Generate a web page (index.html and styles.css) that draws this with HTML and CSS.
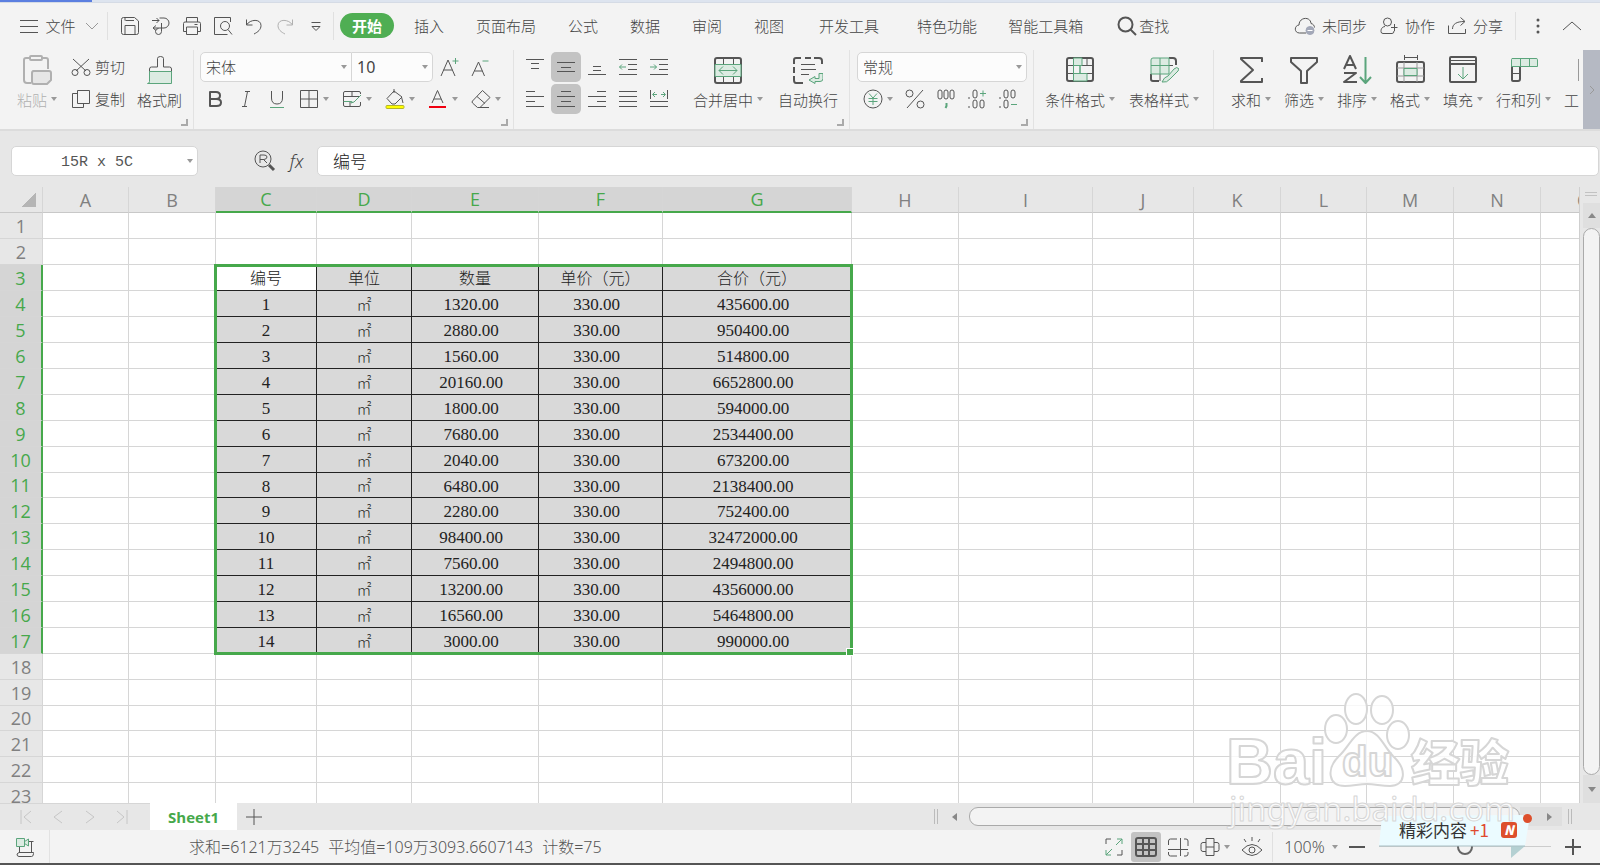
FILE: index.html
```
<!DOCTYPE html>
<html lang="zh-CN">
<head>
    <meta charset="UTF-8">
    <meta name="viewport" content="width=device-width, initial-scale=1.0">
    <title>Sheet1</title>
    <link rel="stylesheet" href="styles.css">
</head>
<body>
    <!-- Document tabs edge -->
    <div class="doc-strip"><span class="doc-active"></span><span class="doc-rest"></span></div>

    <!-- Menu bar -->
    <nav class="menu-bar">
        <button class="file-btn">
            <svg width="20" height="20" viewBox="0 0 20 20"><path d="M1 4.500h18M1 10.500h18M1 16.500h18"/></svg>
            文件
            <svg class="light" width="14" height="20" viewBox="0 0 14 20"><path d="M1 7l6 6 6-6"/></svg>
        </button>
        <span class="sep"></span>
        <div class="quick">
            <button aria-label="保存"><svg width="20" height="20" viewBox="0 0 20 20"><path d="M1.500 3.500q0-2 2-2h11l4 3.500v11.500q0 2-2 2h-13q-2 0-2-2zM5 18v-8.500h10V18M5.500 4.500h8.500M5 1.500v3"/></svg></button>
            <button aria-label="输出"><svg width="20" height="20" viewBox="0 0 20 20"><path d="M1 4.500h7M5.500 2l2.500 2.500L5.500 7M8.500 2H13a5 5 0 0 1 0 10H2M5 9.500L2 12l3 2.500M10.500 7v8.500a3 3 0 1 1-3-3"/></svg></button>
            <button aria-label="打印"><svg width="20" height="20" viewBox="0 0 20 20"><path d="M4.500 6V1.500h11V6M4.500 15.500h-3v-8q0-1.500 1.500-1.500h14q1.500 0 1.500 1.500v8h-3M4.500 11h11v7.500h-11zM12.500 8.500h3"/></svg></button>
            <button aria-label="打印预览"><svg width="20" height="20" viewBox="0 0 20 20"><path d="M17.500 6V1.500h-16v17h13"/><circle cx="12" cy="10" r="4.500"/><path d="M15 13.500l4 5"/></svg></button>
            <button aria-label="撤销"><svg width="20" height="20" viewBox="0 0 20 20"><path d="M2.500 3.500v5.500h6M2.500 9C6 3 17 2.500 17 9.500c0 4-3 6.500-7 8.500"/></svg></button>
            <button aria-label="恢复" class="off"><svg width="20" height="20" viewBox="0 0 20 20"><path d="M17.500 3.500v5.500h-6M17.500 9C14 3 3 2.500 3 9.500c0 4 3 6.500 7 8.500"/></svg></button>
            <button aria-label="更多"><svg width="20" height="20" viewBox="0 0 20 20"><path d="M5.500 6.500h9M6 10.500l4 4 4-4z"/></svg></button>
        </div>
        <span class="sep"></span>
        <button class="tab active">开始</button>
        <button class="tab">插入</button>
        <button class="tab">页面布局</button>
        <button class="tab">公式</button>
        <button class="tab">数据</button>
        <button class="tab">审阅</button>
        <button class="tab">视图</button>
        <button class="tab wide">开发工具</button>
        <button class="tab wide">特色功能</button>
        <button class="tab tight">智能工具箱</button>
        <button class="find">
            <svg width="20" height="20" viewBox="0 0 20 20" stroke-width="2"><circle cx="8.500" cy="8.500" r="7"/><path d="M13.500 13.500l5.500 5.500"/></svg>
            查找
        </button>
        <div class="menu-right">
            <button>
                <svg width="22" height="20" viewBox="0 0 22 20"><path d="M12 17H5.500C0 17 0 9.500 5 9 5 1 16.500 0 17 7.500c2.500.5 3.500 2.500 3.500 4"/><circle cx="16" cy="14.500" r="4" fill="#a3a8b8" stroke="#a3a8b8"/><path d="M13.500 14.500h5" stroke="#fff"/></svg>
                未同步
            </button>
            <button>
                <svg width="20" height="20" viewBox="0 0 20 20"><circle cx="8.500" cy="6" r="4"/><path d="M6 10.500C2.500 11 2 13.500 2 15.500q0 2 2 2h9q2 0 2-2.500M12 11.500h6.500M15.500 8v7"/></svg>
                协作
            </button>
            <button>
                <svg width="20" height="20" viewBox="0 0 20 20"><path d="M1.500 9.500v8h17v-4.500M5.500 13c0-5 4-7.500 12-7.500M13.500 1.500l4.500 4-4.500 4"/></svg>
                分享
            </button>
            <span class="sep"></span>
            <button class="icon-only" aria-label="选项"><svg width="20" height="20" viewBox="0 0 20 20"><g class="dot"><circle cx="10" cy="4" r="1.500"/><circle cx="10" cy="10" r="1.500"/><circle cx="10" cy="16" r="1.500"/></g></svg></button>
            <button class="icon-only" aria-label="折叠"><svg width="20" height="20" viewBox="0 0 20 20"><path d="M1 14l9-8 9 8"/></svg></button>
        </div>
    </nav>

    <!-- Ribbon -->
    <div class="ribbon">
        <div class="ribbon-groups">
            <div class="group g-clip">
                <button class="big off">
                    <svg width="30" height="30" viewBox="0 0 30 30" stroke-width="2"><path d="M8 3H4q-2 0-2 2v20q0 3 3 3h4M20 3h4q2 0 2 2v9"/><rect x="8" y="1" width="12" height="4" rx="1"/><path fill="#e6e6e6" d="M11 16h16q2 0 2 2v7l-4 4H12q-2 0-2-2V18q0-2 2-2z"/></svg>
                    <span>粘贴<i class="caret"></i></span>
                </button>
                <div class="stack">
                    <button class="line"><svg width="20" height="20" viewBox="0 0 20 20"><path d="M2 2l13 12M18 2L5 14"/><circle cx="4" cy="15.500" r="3"/><circle cx="16" cy="15.500" r="3"/></svg>剪切</button>
                    <button class="line"><svg width="20" height="20" viewBox="0 0 20 20"><path d="M6.500 1.500h12v13h-12zM6.500 4.500h-5v14h11v-4"/></svg>复制</button>
                </div>
                <button class="big">
                    <svg width="30" height="30" viewBox="0 0 30 30"><path d="M4.500 17v-3q0-2 2-2h6V3.500q0-2 3-2t3 2V12h6q2 0 2 2v3"/><path class="gf" d="M4.500 16.500h22v12h-24q2 0 2-2z"/></svg>
                    <span>格式刷</span>
                </button>
                <i class="launcher"></i>
            </div>

            <div class="group g-font">
                <div class="stack">
                    <div class="row">
                        <span class="combo font-name"><select aria-label="字体"><option>宋体</option></select></span>
                        <span class="combo font-size"><select aria-label="字号"><option>10</option></select></span>
                        <button class="tool" aria-label="增大字号"><svg width="22" height="22" viewBox="0 0 22 22"><path d="M3 20L10 4l7 16M5.500 14h9"/><path class="g" d="M14.500 5h6M17.500 2v6"/></svg></button>
                        <button class="tool" aria-label="减小字号"><svg width="22" height="22" viewBox="0 0 22 22"><path d="M3 20L9.500 6l6 14M5.500 15h8"/><path class="g" d="M13.500 5h6"/></svg></button>
                    </div>
                    <div class="row">
                        <button class="tool" aria-label="加粗"><svg width="20" height="20" viewBox="0 0 20 20" stroke-width="2"><path d="M5 3h6q4 0 4 3.500T11 10H5zM5 10h6.500q4.500 0 4.500 3.500T11.500 17H5z"/></svg></button>
                        <button class="tool" aria-label="倾斜"><svg width="20" height="20" viewBox="0 0 20 20"><path d="M9 2.500h5M6 17.500h5M11.500 2.500l-3 15"/></svg></button>
                        <button class="tool" aria-label="下划线"><svg width="20" height="20" viewBox="0 0 20 20"><path d="M4.500 2v7q0 6 5.500 6t5.500-6V2"/><path class="g" d="M3 18.500h14"/></svg></button>
                        <button class="split" aria-label="边框"><svg width="20" height="20" viewBox="0 0 20 20"><path d="M1.500 1.500h17v17h-17zM10 1.500v17M1.500 10h17"/></svg><i class="caret"></i></button>
                        <button class="split" aria-label="绘制表格"><svg width="20" height="20" viewBox="0 0 20 20"><path d="M18.500 5V4q0-1.500-1.500-1.500H3Q1.500 2.500 1.500 4v12q0 1.500 1.500 1.500h14q1.500 0 1.500-1.500v-3M1.500 7.500h16M10 2.500v5M8 12.500v5"/><path class="g" d="M19 6l-7 7-3 1 1-2M1.500 12.500h8"/></svg><i class="caret"></i></button>
                        <button class="split" aria-label="填充颜色"><svg width="20" height="20" viewBox="0 0 20 20"><path d="M9 2l8 6-7 7H7L2 9.500zM9 0v4M16.500 8l1.500 6"/><rect x="1" y="16.500" width="18" height="3" rx="1" fill="#ff0" stroke="#b5b52a"/></svg><i class="caret"></i></button>
                        <button class="split" aria-label="字体颜色"><svg width="20" height="20" viewBox="0 0 20 20"><path d="M4 14L9.500 1.500 15 14M6 10h7"/><path d="M1 18h17" stroke="#f00010" stroke-width="2"/></svg><i class="caret"></i></button>
                        <button class="split" aria-label="清除"><svg width="20" height="20" viewBox="0 0 20 20"><path d="M1.500 12l10-10.500 7.500 7L9 18.500H6.500L1.500 14q-1-1 0-2zM6 7.500l8 7M9 18.500h9"/></svg><i class="caret"></i></button>
                    </div>
                </div>
                <i class="launcher"></i>
            </div>

            <div class="group g-align">
                <div class="stack">
                    <div class="row">
                        <button class="tool" aria-label="顶端对齐"><svg width="20" height="20" viewBox="0 0 20 20"><path d="M1 2.500h18M6 6.500h8M6 11.500h8"/></svg></button>
                        <button class="tool on" aria-label="垂直居中"><svg width="20" height="20" viewBox="0 0 20 20"><path d="M1 5.500h18M5 10.500h10M1 14.500h18"/></svg></button>
                        <button class="tool" aria-label="底端对齐"><svg width="20" height="20" viewBox="0 0 20 20"><path d="M6 9.500h8M6 13.500h8M1 17.500h18"/></svg></button>
                        <button class="tool" aria-label="减少缩进"><svg width="20" height="20" viewBox="0 0 20 20"><path d="M1 2.500h18M10 7.500h9M10 12.500h9M1 17.500h18"/><path class="g" d="M8 10H1.500M4 7.500L1.500 10 4 12.500"/></svg></button>
                        <button class="tool" aria-label="增加缩进"><svg width="20" height="20" viewBox="0 0 20 20"><path d="M1 2.500h18M10 7.500h9M10 12.500h9M1 17.500h18"/><path class="g" d="M1 10h6.500M5 7.500L7.500 10 5 12.500"/></svg></button>
                    </div>
                    <div class="row">
                        <button class="tool" aria-label="左对齐"><svg width="20" height="20" viewBox="0 0 20 20"><path d="M1 2.500h9M1 7.500h18M1 12.500h9M1 17.500h18"/></svg></button>
                        <button class="tool on" aria-label="水平居中"><svg width="20" height="20" viewBox="0 0 20 20"><path d="M5 2.500h10M1 7.500h18M5 12.500h10M1 17.500h18"/></svg></button>
                        <button class="tool" aria-label="右对齐"><svg width="20" height="20" viewBox="0 0 20 20"><path d="M10 2.500h9M1 7.500h18M10 12.500h9M1 17.500h18"/></svg></button>
                        <button class="tool" aria-label="两端对齐"><svg width="20" height="20" viewBox="0 0 20 20"><path d="M1 2.500h18M1 7.500h18M1 12.500h18M1 17.500h18"/></svg></button>
                        <button class="tool" aria-label="分散对齐"><svg width="20" height="20" viewBox="0 0 20 20"><path d="M1.500 1v9M18.500 1v9M1 12.500h18M1 17.500h18"/><path class="g" d="M4 5.500h4M6 3L3.500 5.500 6 8M12 5.500h4M14 3l2.500 2.500L14 8"/></svg></button>
                    </div>
                </div>
                <button class="big merge">
                    <svg width="30" height="30" viewBox="0 0 30 30"><rect x="2" y="3" width="26" height="25" rx="2" stroke-width="2"/><path d="M10.500 3v6M20.500 3v6M10.500 22v6M20.500 22v6"/><path class="gf" d="M2 9.500h26v12H2z"/><path class="g" d="M6 15.500h18M10 11.500l-4 4 4 4M20 11.500l4 4-4 4"/></svg>
                    <span>合并居中<i class="caret"></i></span>
                </button>
                <button class="big wrap">
                    <svg width="30" height="30" viewBox="0 0 30 30"><path stroke-width="2" d="M1 9V5q0-2 2-2h5M12 3h6M21 3h5q3 0 3 3v3M1 12v6M1 21v4q0 3 2 3h7"/><path d="M8 9.500h14M8 14.500h15M8 19.500h8"/><path class="gf" d="M26 18.500h4v5q0 3-3 3h-5v2l-6-3.500 6-3.500v2h4z"/></svg>
                    <span>自动换行</span>
                </button>
                <i class="launcher"></i>
            </div>

            <div class="group g-num">
                <div class="stack">
                    <span class="combo num-format"><select aria-label="数字格式"><option>常规</option></select></span>
                    <div class="row">
                        <button class="split" aria-label="货币"><svg width="20" height="20" viewBox="0 0 20 20"><circle cx="10" cy="10" r="9"/><path class="g" d="M6 4.500l4 4.500 4-4.500M10 9v7M5.500 9.500h9M5.500 12.500h9"/></svg><i class="caret"></i></button>
                        <button class="tool" aria-label="百分比"><svg width="20" height="20" viewBox="0 0 20 20"><circle cx="4.500" cy="4.500" r="3.500"/><circle cx="15.500" cy="15.500" r="3.500"/><path d="M18 1L2 19"/></svg></button>
                        <button class="tool" aria-label="千位分隔"><svg width="20" height="20" viewBox="0 0 20 20"><rect x="2" y="1" width="4" height="9" rx="2"/><rect x="8" y="1" width="4" height="9" rx="2"/><rect x="14" y="1" width="4" height="9" rx="2"/><path class="g" stroke-width="2" d="M10.500 14v3l-1 2"/></svg></button>
                        <button class="tool" aria-label="增加小数"><svg width="20" height="20" viewBox="0 0 20 20"><path d="M2 8v2M2 17v2"/><rect x="6" y="1" width="4" height="8" rx="2"/><rect x="6" y="11" width="4" height="8" rx="2"/><rect x="13" y="11" width="4" height="8" rx="2"/><path class="g" d="M13 4.500h6M16 1.500v6"/></svg></button>
                        <button class="tool" aria-label="减少小数"><svg width="20" height="20" viewBox="0 0 20 20"><path d="M2 8v2M2 17v2"/><rect x="6" y="1" width="4" height="8" rx="2"/><rect x="13" y="1" width="4" height="8" rx="2"/><rect x="6" y="11" width="4" height="8" rx="2"/><path class="g" d="M13 15.500h6"/></svg></button>
                    </div>
                </div>
                <i class="launcher"></i>
            </div>

            <div class="group g-style">
                <button class="big">
                    <svg width="30" height="30" viewBox="0 0 30 30"><rect x="2" y="3" width="26" height="23" rx="2" stroke-width="2"/><path d="M2 10.500h6M2 18.500h6M17 10.500h11M22 18.500h6M22 3v7"/><path class="gf" d="M8.500 3H17v7.500h-2v8h7V26H8.500v-7.500H15v-8H8.500zM8.500 3v23"/></svg>
                    <span>条件格式<i class="caret"></i></span>
                </button>
                <button class="big">
                    <svg width="30" height="30" viewBox="0 0 30 30"><path stroke-width="2" d="M20 3h4q3 0 3 3v4M2 19v5q0 2 2 2h6"/><path d="M11 19v7M20 10.500h4"/><path class="gf" d="M4 3h16v16H2V5q0-2 2-2zM2 10.500h18M11 3v16"/><path class="gf" d="M30 14q-2-3-5 0l-6 7q-4 1-6 6 5 1 8-3l8-8z"/></svg>
                    <span>表格样式<i class="caret"></i></span>
                </button>
            </div>

            <div class="group g-edit">
                <button class="big">
                    <svg width="30" height="30" viewBox="0 0 30 30" stroke-width="2"><path d="M26 7V3H5v1l12 11L5 26v1h21v-4"/></svg>
                    <span>求和<i class="caret"></i></span>
                </button>
                <button class="big">
                    <svg width="30" height="30" viewBox="0 0 30 30" stroke-width="2"><path d="M2 3h26v4l-10 9v12h-6V16L2 7z"/></svg>
                    <span>筛选<i class="caret"></i></span>
                </button>
                <button class="big">
                    <svg width="30" height="30" viewBox="0 0 30 30" stroke-width="2"><path d="M2 14L8 1l6 13M4.500 10h7M2 18h12L2 27h13"/><path class="g" d="M23.500 2v26M18 22l5.500 6 5.500-6"/></svg>
                    <span>排序<i class="caret"></i></span>
                </button>
                <button class="big">
                    <svg width="30" height="30" viewBox="0 0 30 30"><path d="M9 2.500h14M9.500 0v5M22.500 0v5"/><rect x="2" y="7" width="27" height="20" rx="2" stroke-width="2"/><path class="light" d="M2 13h27M2 21h27M9 7v20M22 7v20"/><path class="gf" d="M9 13.500h13v7H9z"/></svg>
                    <span>格式<i class="caret"></i></span>
                </button>
                <button class="big">
                    <svg width="30" height="30" viewBox="0 0 30 30"><rect x="2" y="2" width="26" height="25" rx="1" stroke-width="2"/><path d="M2 5.500h26"/><path stroke-width="2" d="M2 9h26"/><path class="g" d="M15 12v12M10 19l5 5 5-5"/></svg>
                    <span>填充<i class="caret"></i></span>
                </button>
                <button class="big">
                    <svg width="30" height="30" viewBox="0 0 30 30"><path stroke-width="2" d="M3 11v14q0 1 1 1h5q2 0 2-2V11"/><path d="M2 18.500h9"/><path class="gf" d="M3 3.500h24q1.500 0 1.500 1v7h-26v-7q0-1 1-1zM11.500 3.500v8M20.500 3.500v8"/></svg>
                    <span>行和列<i class="caret"></i></span>
                </button>
                <button class="big last">
                    <svg width="15" height="30" viewBox="0 0 15 30"><path class="light" d="M14.500 4v22"/></svg>
                    <span>工</span>
                </button>
            </div>
        </div>
        <button class="ribbon-scroll" aria-label="向右滚动"><svg class="light" width="8" height="10" viewBox="0 0 8 10"><path d="M2 1l4 4-4 4"/></svg></button>
    </div>

    <!-- Formula bar -->
    <div class="formula-bar">
        <span class="combo name-box"><input type="text" aria-label="名称框" value="15R x 5C"></span>
        <button class="fx-zoom" aria-label="查看"><svg width="22" height="22" viewBox="0 0 22 22"><circle cx="9" cy="9" r="8"/><path d="M6 13V5h4q3 0 3 2t-3 2.500H6M9.500 9.500L13 13"/><path stroke-width="3" d="M15 15l5 5"/></svg></button>
        <button class="fx" aria-label="插入函数">fx</button>
        <input class="formula" type="text" aria-label="编辑栏" value="编号">
    </div>

    <!-- Sheet -->
    <main class="sheet">
        <div class="grid-pane">
            <table class="grid">
                <colgroup>
                    <col class="c-head"><col class="c-a"><col class="c-b"><col class="c-c"><col class="c-d"><col class="c-e"><col class="c-f"><col class="c-g"><col class="c-h"><col class="c-i"><col class="c-c"><col class="c-b"><col class="c-a"><col class="c-b"><col class="c-b"><col class="c-b">
                </colgroup>
                <thead><tr id="colHeads"></tr></thead>
                <tbody id="rows"></tbody>
            </table>
        </div>
        <div class="v-scroll">
            <span class="grip"></span>
            <button class="arrow up" aria-label="上"></button>
            <span class="thumb"></span>
            <button class="arrow down" aria-label="下"></button>
        </div>
    </main>

    <!-- Sheet tabs -->
    <div class="tab-bar">
        <div class="tab-nav">
            <button aria-label="第一个"><svg width="14" height="14" viewBox="0 0 14 14"><path d="M2 0v14M12 1L5 7l7 6"/></svg></button>
            <button aria-label="上一个"><svg width="14" height="14" viewBox="0 0 14 14"><path d="M11 1L3 7l8 6"/></svg></button>
            <button aria-label="下一个"><svg width="14" height="14" viewBox="0 0 14 14"><path d="M3 1l8 6-8 6"/></svg></button>
            <button aria-label="最后一个"><svg width="14" height="14" viewBox="0 0 14 14"><path d="M12 0v14M2 1l7 6-7 6"/></svg></button>
        </div>
        <button class="sheet-tab">Sheet1</button>
        <button class="add-sheet" aria-label="新建"><svg width="18" height="18" viewBox="0 0 18 18"><path d="M9 1v16M1 9h16"/></svg></button>
        <div class="h-scroll">
            <span class="bars"></span>
            <button class="arrow left" aria-label="左"></button>
            <span class="thumb"></span>
            <button class="arrow right" aria-label="右"></button>
            <span class="bars"></span>
        </div>
    </div>

    <!-- Status bar -->
    <footer class="status-bar">
        <button class="record" aria-label="录制"><svg width="20" height="22" viewBox="0 0 20 22"><path d="M13 5.500h5.500M16.500 6v10M4.500 11v6M4 16.500h14.500v1q0 3-2 3H4q-2 0-2-2.500l2-1.500"/><path class="gf" d="M1.500 2.500h8v8h-8zM9.500 5.500l4-2.500v7l-4-2.500"/></svg></button>
        <p class="summary"><span>求和=6121万3245</span><span>平均值=109万3093.6607143</span><span>计数=75</span></p>
        <div class="views">
            <button aria-label="全屏"><svg width="20" height="20" viewBox="0 0 20 20"><path d="M2 7V2h5M18 13v5h-5"/><path class="g" d="M12 8l6-6M13 2h5v5M8 12l-6 6M2 13v5h5"/></svg></button>
            <button class="on" aria-label="普通视图"><svg width="22" height="20" viewBox="0 0 22 20" stroke-width="2"><rect x="1" y="1" width="20" height="18" rx="2"/><path d="M8 1v18M14 1v18M1 7h20M1 13h20"/></svg></button>
            <button aria-label="分页预览"><svg width="22" height="20" viewBox="0 0 22 20"><path d="M1.500 8V4q0-2 2-2H10M13.500 1v18M17 2h2q2 0 2 2v5M1 12.500h20M1.500 15v2q0 2 2 2H10M21 15v2q0 2-2 2h-2"/></svg></button>
            <button class="with-caret" aria-label="页面布局"><svg width="20" height="20" viewBox="0 0 20 20"><path d="M6 1.500h8v17H6zM6 5.500H3q-2 0-2 2v5q0 2 2 2h3M14 5.500h3q2 0 2 2v5q0 2-2 2h-3M6 10h8"/></svg><i class="caret"></i></button>
            <button aria-label="护眼模式"><svg width="22" height="22" viewBox="0 0 22 22"><path d="M1 14q10-11 20 0-10 11-20 0zM11 1v4M3 3l2 3M19 3l-2 3"/><circle cx="11" cy="14" r="3"/></svg></button>
        </div>
        <button class="zoom-value">100%<i class="caret"></i></button>
        <button class="zoom-step" aria-label="缩小"><svg width="16" height="16" viewBox="0 0 16 16" stroke-width="2"><path d="M0 8h16"/></svg></button>
        <input class="zoom-range" type="range" aria-label="缩放" min="0" max="100" value="50">
        <button class="zoom-step" aria-label="放大"><svg width="16" height="16" viewBox="0 0 16 16" stroke-width="2"><path d="M0 8h16M8 0v16"/></svg></button>
    </footer>

    <!-- Floating tip -->
    <div class="tip">
        <svg class="tip-shape" width="156" height="48" viewBox="0 0 156 48"><path d="M133 34h14l-14 12z" fill="#b4d0d2"/><path d="M4 4L152 3l-5 31H1z" fill="#ebfbff"/><path d="M1 34h146" stroke="#a9bfc4"/></svg>
        <a class="tip-text" href="#">精彩内容<b>+1</b><em>N</em></a>
    </div>

    <!-- Watermark -->
    <svg class="watermark" width="310" height="150" viewBox="0 0 310 150" aria-hidden="true">
        <g class="mark">
            <text class="big-text" x="3" y="91">Bai</text>
            <ellipse cx="113" cy="36" rx="11" ry="14"/>
            <ellipse cx="133" cy="16" rx="11" ry="15"/>
            <ellipse cx="159" cy="17" rx="11" ry="14"/>
            <ellipse cx="175" cy="42" rx="11" ry="14"/>
            <path d="M144 38c12 0 17 16 26 25 15 14 12 30-3 30-9 0-15-2-23-2s-14 2-22 2c-17 0-19-17-6-30 10-9 15-25 28-25z"/>
            <text class="du-text" x="119" y="83">du</text>
            <text class="cn-text" x="188" y="88">经验</text>
            <text class="url-text" x="6" y="128">jingyan.baidu.com</text>
        </g>
    </svg>

    <script>
        const names = 'ABCDEFGHIJKLMNO'.split('');
        const quantities = [1320, 2880, 1560, 20160, 1800, 7680, 2040, 6480, 2280, 98400, 7560, 13200, 16560, 3000];
        const price = 330;

        // rows 3-17 hold the selected block in columns C-G
        const block = [['编号', '单位', '数量', '单价（元）', '合价（元）']];
        quantities.forEach((q, i) => {
            block.push([i + 1, '㎡', q.toFixed(2), price.toFixed(2), (q * price).toFixed(2)]);
        });

        let head = '<th class="corner"></th>';
        names.forEach((n, i) => {
            head += `<th class="${i >= 2 && i <= 6 ? 'picked' : ''}">${n}</th>`;
        });
        document.getElementById('colHeads').innerHTML = head;

        const shortRows = [11, 20];
        let html = '';
        for (let r = 1; r <= 23; r++) {
            const data = block[r - 3];
            html += `<tr class="${shortRows.includes(r) ? 'short' : ''}"><th class="${data ? 'picked' : ''}">${r}</th>`;
            names.forEach((n, c) => {
                if (data && c >= 2 && c <= 6) {
                    const cls = ['cell'];
                    if (r === 3 && c === 2) cls.push('current');
                    if (r > 3 && c === 3) cls.push('unit');
                    if (r > 3 && c > 3) cls.push('num');
                    html += `<td class="${cls.join(' ')}">${data[c - 2]}${r === 3 && c === 2 ? '<div class="selection"></div>' : ''}</td>`;
                } else {
                    html += '<td></td>';
                }
            });
            html += '</tr>';
        }
        document.getElementById('rows').innerHTML = html;
    </script>
</body>
</html>
```

FILE: styles.css
```
* {
    box-sizing: border-box;
}
body {
    display: flex;
    flex-direction: column;
    height: 100vh;
    margin: 0;
    overflow: hidden;
    position: relative;
    background-color: #e7e7e7;
    color: #444;
    font-family: "Noto Sans CJK SC", "Noto Sans", sans-serif;
    font-size: 15px;
    font-weight: 300;
    line-height: 20px;
}
button {
    display: flex;
    align-items: center;
    justify-content: center;
    padding: 0;
    border: none;
    background: none;
    color: inherit;
    font: inherit;
    white-space: nowrap;
}
input, select {
    color: inherit;
    font: inherit;
}
svg {
    flex: none;
    fill: none;
    stroke: #555;
    stroke-linejoin: round;
}
svg .g {
    stroke: #5ba57c;
}
svg .gf {
    stroke: #5ba57c;
    fill: #dcebe2;
}
svg .light, svg.light {
    stroke: #999;
}
svg .dot {
    fill: #555;
    stroke: none;
}
.caret {
    display: inline-block;
    border: 3px solid transparent;
    border-top: 4px solid #999;
    border-bottom: none;
    margin-left: 4px;
}
.off {
    color: #b0b0b0;
}
.off svg {
    stroke: #b0b0b0;
}

/* Document tabs edge */
.doc-strip {
    display: flex;
    height: 3px;
    flex: none;
    border-bottom: 1px solid #d5dbe5;
}
.doc-active {
    width: 92px;
    background-color: #5b7fe0;
}
.doc-rest {
    flex: 1;
    background-color: #dde4ef;
}

/* Menu bar */
.menu-bar {
    display: flex;
    align-items: center;
    flex: none;
    height: 47px;
    padding: 0 0 2px 19px;
    background-color: #f3f3f3;
    white-space: nowrap;
}
.file-btn {
    gap: 6px;
    width: 80px;
}
.file-btn .light {
    margin-left: 3px;
}
.sep {
    width: 1px;
    height: 28px;
    margin: 0 6px 0 8px;
    background-color: #e0e0e0;
}
.quick {
    display: flex;
}
.quick button {
    width: 31px;
    height: 30px;
}
.quick + .sep {
    margin-left: 2px;
}
.tab {
    height: 25px;
    padding: 0 16px;
}
.tab.active {
    width: 54px;
    margin-right: 4px;
    padding: 0;
    border-radius: 13px;
    background-color: #4fae53;
    color: #fff;
    font-weight: 700;
}
.tab.wide {
    padding: 0 19px;
}
.tab.tight {
    padding: 0 12px;
}
.find {
    gap: 2px;
    margin-left: 22px;
}
.menu-right {
    display: flex;
    align-items: center;
    margin-left: auto;
    padding-right: 18px;
    gap: 12px;
}
.menu-right button {
    gap: 6px;
}
.menu-right .sep {
    margin: 0;
}
.menu-right .icon-only + .icon-only {
    margin-left: 2px;
}

/* Ribbon */
.ribbon {
    display: flex;
    flex: none;
    height: 81px;
    background-color: #f3f3f3;
    border-bottom: 2px solid #dcdcdc;
}
.ribbon-groups {
    display: flex;
    flex: 1;
    min-width: 0;
    overflow: hidden;
}
.group {
    position: relative;
    display: flex;
    align-items: flex-start;
    flex: none;
    padding-top: 2px;
    border-right: 1px solid #e2e2e2;
}
.g-clip {
    width: 194px;
    padding-left: 17px;
}
.g-clip .stack {
    margin: 0 12px 0 14px;
}
.g-font {
    width: 320px;
    padding-left: 6px;
}
.g-align {
    width: 336px;
    padding-left: 6px;
}
.g-num {
    width: 184px;
    padding-left: 7px;
}
.g-style {
    width: 180px;
    padding-left: 11px;
    gap: 14px;
}
.g-edit {
    padding-left: 17px;
    gap: 13px;
    border-right: none;
}
.stack {
    display: flex;
    flex-direction: column;
    gap: 2px;
}
.row {
    display: flex;
    gap: 1px;
    height: 30px;
}
.big {
    flex-direction: column;
    padding-top: 3px;
    gap: 5px;
}
.big span {
    display: block;
    height: 20px;
}
.big .caret {
    vertical-align: 5px;
}
.merge {
    margin-left: 19px;
}
.wrap {
    margin-left: 15px;
}
.line {
    height: 30px;
    gap: 4px;
}
.tool {
    width: 30px;
    height: 30px;
    border-radius: 5px;
}
.on {
    background-color: #c3c3c3;
}
.split {
    width: 42px;
    height: 30px;
}
.launcher {
    position: absolute;
    right: 5px;
    bottom: 3px;
    width: 7px;
    height: 7px;
    border: solid #aaa;
    border-width: 0 2px 2px 0;
}
.combo {
    position: relative;
    display: block;
    height: 30px;
}
.combo::after {
    content: "";
    position: absolute;
    right: 5px;
    top: 13px;
    border: 3px solid transparent;
    border-top: 4px solid #999;
    border-bottom: none;
}
.combo select,
.combo input {
    width: 100%;
    height: 30px;
    padding: 0 5px;
    border: 1px solid #d6d6d6;
    border-radius: 5px;
    background-color: #fcfcfc;
    appearance: none;
}
.font-name {
    width: 152px;
}
.font-name select {
    border-radius: 5px 0 0 5px;
}
.font-size {
    width: 81px;
    margin-left: -1px;
}
.font-size select {
    border-left: none;
    border-radius: 0 5px 5px 0;
    font-family: "Noto Sans", sans-serif;
    font-size: 16px;
    font-weight: 400;
}
.num-format {
    width: 170px;
}
.ribbon-scroll {
    flex: none;
    width: 17px;
    background-color: #b5b9c3;
}

/* Formula bar */
.formula-bar {
    display: flex;
    align-items: center;
    flex: none;
    height: 56px;
    padding: 3px 1px 0 11px;
}
.name-box {
    width: 187px;
    margin-right: 56px;
}
.name-box input {
    padding: 3px 20px 0 5px;
    background-color: #fff;
    color: #555;
    font-family: "Liberation Mono", monospace;
    text-align: center;
}
.fx-zoom {
    width: 22px;
}
.fx {
    width: 41px;
    font-family: "Noto Sans", sans-serif;
    font-size: 18px;
    font-style: italic;
}
.formula {
    flex: 1;
    min-width: 0;
    height: 30px;
    padding: 0 15px;
    border: 1px solid #d6d6d6;
    border-radius: 5px;
    background-color: #fff;
    color: #222;
    font-size: 17px;
}

/* Sheet */
.sheet {
    display: flex;
    flex: 1;
    min-height: 0;
}
.grid-pane {
    flex: 1;
    min-width: 0;
    overflow: hidden;
    border-right: 1px solid #cfcfcf;
    background-color: #fff;
}
.grid {
    width: 1628px;
    table-layout: fixed;
    border-collapse: separate;
    border-spacing: 0;
}
.c-head { width: 43px; }
.c-a { width: 86px; }
.c-b { width: 87px; }
.c-c { width: 101px; }
.c-d { width: 95px; }
.c-e { width: 127px; }
.c-f { width: 124px; }
.c-g { width: 189px; }
.c-h { width: 107px; }
.c-i { width: 134px; }
.grid tr {
    height: 26px;
}
.grid tr.short {
    height: 25px;
}
.grid th,
.grid td {
    padding: 0;
    border-right: 1px solid #d6d6d6;
    border-bottom: 1px solid #d6d6d6;
    line-height: 24px;
    text-align: center;
}
.grid th {
    background-color: #e7e7e7;
    color: #808080;
    font-family: "Open Sans", sans-serif;
    font-size: 18px;
    font-weight: 400;
}
.grid thead th {
    border-bottom-color: #c8c8c8;
}
.grid .corner {
    background-image: linear-gradient(135deg, transparent 50%, #b5b5b5 50%);
    background-size: 14px 14px;
    background-position: 22px 6px;
    background-repeat: no-repeat;
}
.grid th.picked {
    background-color: #d5d5d5;
    color: #46a84b;
}
.grid thead th.picked {
    border-bottom: 2px solid #46a84b;
}
.grid tbody th.picked {
    border-right: 2px solid #46a84b;
}
.grid .cell {
    position: relative;
    padding-top: 3px;
    border-color: #222;
    background-color: #d9d9d9;
    color: #222;
    font-family: "Liberation Serif", "Noto Sans CJK SC", serif;
    font-size: 17px;
    line-height: 22px;
}
.grid tr:nth-child(3) .cell {
    font-size: 16px;
}
.grid .short th,
.grid .short td {
    line-height: 21px;
}
.grid .num {
    padding-right: 8px;
}
.grid .unit {
    font-size: 15px;
}
.grid .current {
    background-color: #fff;
}
.selection {
    position: absolute;
    left: -2px;
    top: -1px;
    z-index: 1;
    width: 639px;
    height: 391px;
    border: 3px solid #46a84b;
}
.selection::after {
    content: "";
    position: absolute;
    right: -4px;
    bottom: -4px;
    width: 6px;
    height: 6px;
    border: 1px solid #fff;
    background-color: #46a84b;
}
.arrow::before {
    content: "";
    border: 4px solid transparent;
}
.arrow.up::before {
    border-top: none;
    border-bottom: 5px solid #888;
}
.arrow.down::before {
    border-bottom: none;
    border-top: 5px solid #888;
}
.arrow.left::before {
    border-left: none;
    border-right: 5px solid #888;
}
.arrow.right::before {
    border-right: none;
    border-left: 5px solid #888;
}
.v-scroll {
    display: flex;
    flex-direction: column;
    flex: none;
    width: 20px;
    padding-left: 3px;
}
.grip {
    height: 4px;
    margin: 5px 3px 7px 2px;
    border: solid #c2c2c2;
    border-width: 1px 0;
}
.v-scroll .arrow {
    height: 25px;
    background-color: #dfdfdf;
}
.v-scroll .down {
    height: 28px;
}
.thumb {
    flex: 1;
    border: 1px solid #aaa;
    border-radius: 9px;
    background-color: #f3f3f3;
}

/* Sheet tabs */
.tab-bar {
    display: flex;
    align-items: stretch;
    flex: none;
    height: 27px;
}
.tab-nav {
    display: flex;
    align-items: center;
    width: 150px;
    padding-left: 19px;
    gap: 18px;
    border-top: 1px solid #d6d6d6;
}
.tab-nav svg {
    stroke: #c6c6c6;
}
.sheet-tab {
    width: 87px;
    background-color: #fff;
    color: #46a84b;
    font-family: "Open Sans", sans-serif;
    font-weight: 700;
}
.add-sheet {
    width: 33px;
}
.h-scroll {
    display: flex;
    align-items: stretch;
    width: 668px;
    margin-left: auto;
    padding: 4px 0;
}
.bars {
    width: 4px;
    margin: 2px 2px;
    border: solid #bbb;
    border-width: 0 1px;
}
.h-scroll .left {
    width: 29px;
}
.h-scroll .right {
    width: 42px;
    margin-right: 4px;
    padding-left: 16px;
    background-color: #dfdfdf;
}
.h-scroll .bars:last-child {
    margin-right: 28px;
}

/* Status bar */
.status-bar {
    display: flex;
    align-items: center;
    flex: none;
    height: 35px;
    padding-right: 19px;
    background-color: #f3f3f3;
    border-bottom: 2px solid #555;
}
.record {
    width: 50px;
    height: 33px;
    border-right: 1px solid #e2e2e2;
}
.summary {
    display: flex;
    gap: 9px;
    margin: 0 auto 0 139px;
    color: #555;
    font-family: "Noto Sans", "Noto Sans CJK SC", sans-serif;
    font-size: 16px;
}
.views {
    display: flex;
    gap: 2px;
    padding-right: 5px;
    border-right: 1px solid #e0e0e0;
}
.views button {
    width: 30px;
    height: 30px;
    border-radius: 3px;
}
.views .with-caret {
    width: 40px;
}
.zoom-value {
    width: 76px;
    font-family: "Noto Sans", sans-serif;
    font-size: 16px;
    color: #555;
}
.zoom-value .caret {
    margin-left: 7px;
}
.zoom-range {
    width: 172px;
    height: 18px;
    margin: 0 14px;
    background: linear-gradient(#ccc, #ccc) no-repeat center / 100% 1px;
    appearance: none;
}
.zoom-range::-webkit-slider-thumb {
    width: 16px;
    height: 16px;
    border: 2px solid #666;
    border-radius: 50%;
    background-color: #f3f3f3;
    appearance: none;
}

/* Floating tip */
.tip {
    position: absolute;
    right: 66px;
    bottom: 5px;
    width: 156px;
    height: 48px;
}
.tip-shape {
    display: block;
    stroke: none;
}
.tip::after {
    content: "";
    position: absolute;
    right: 2px;
    top: 2px;
    width: 9px;
    height: 9px;
    border-radius: 50%;
    background-color: #dd4f2c;
}
.tip-text {
    position: absolute;
    left: 21px;
    top: 8px;
    display: flex;
    align-items: center;
    color: #333;
    font-size: 17px;
    font-weight: 400;
    text-decoration: none;
}
.tip-text b {
    margin: 0 12px 0 3px;
    color: #e04a2e;
    font-weight: 400;
}
.tip-text em {
    width: 16px;
    border-radius: 3px;
    background-color: #dd4f2c;
    color: #fff;
    font-size: 13px;
    font-weight: 900;
    line-height: 16px;
    text-align: center;
}

/* Watermark */
.watermark {
    position: absolute;
    right: 67px;
    bottom: 22px;
    pointer-events: none;
}
.mark {
    fill: #fff;
    fill-opacity: 0.8;
    stroke: #d6d6d6;
    stroke-width: 2px;
    font-family: "Liberation Sans", sans-serif;
    font-weight: 700;
}
.big-text {
    font-size: 65px;
}
.du-text {
    font-size: 42px;
}
.cn-text {
    font-family: "Noto Sans CJK SC", sans-serif;
    font-size: 49px;
    font-weight: 900;
}
.url-text {
    font-family: "Noto Sans", sans-serif;
    font-size: 33px;
    font-weight: 400;
    stroke-width: 1px;
}
```
